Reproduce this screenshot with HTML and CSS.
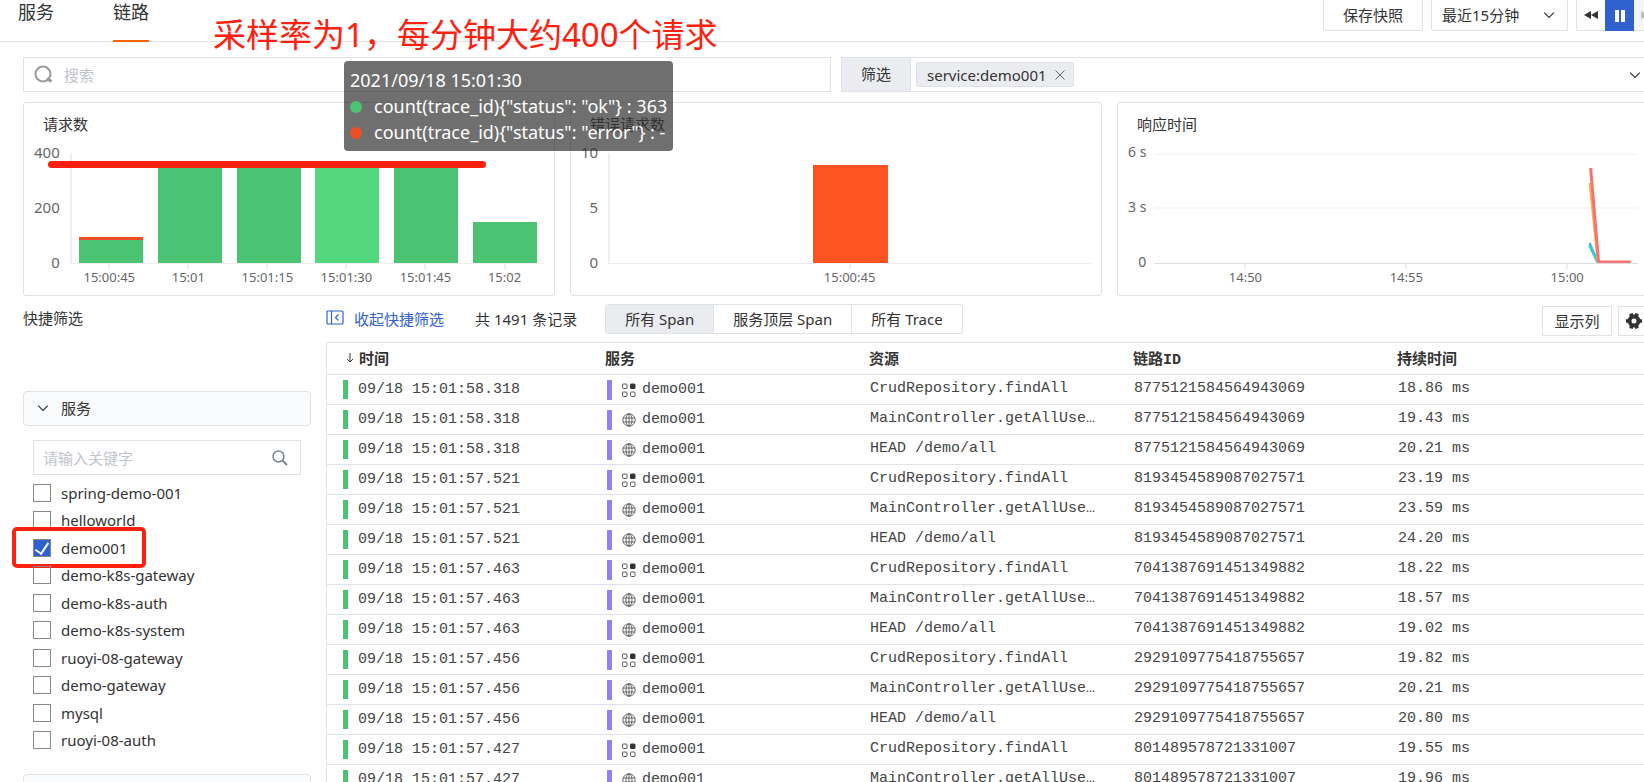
FILE: index.html
```html
<!DOCTYPE html>
<html lang="zh-CN">

<head>
    <meta charset="UTF-8">
    <meta name="viewport" content="width=device-width, initial-scale=1.0">
    <title>链路</title>
    <link rel="stylesheet" href="styles.css">
</head>

<body>
    <svg class="sprite" width="0" height="0">
        <symbol id="i-down" viewBox="0 0 10 10"><path d="M1 3l4 4 4-4" fill="none" stroke="currentColor"/></symbol>
        <symbol id="i-grid" viewBox="0 0 14 14">
            <g fill="none" stroke="#444" stroke-width="0.9"><rect x="0.5" y="1" width="4.500" height="4.500" rx="1"/><rect x="0.5" y="9" width="4.500" height="4.500" rx="1"/><rect x="8.500" y="9" width="4.500" height="4.500" rx="1"/></g>
            <rect x="8" y="0.5" width="5.500" height="5.500" rx="1.500" fill="#333"/>
        </symbol>
        <symbol id="i-globe" viewBox="0 0 14 14">
            <g fill="none" stroke="#444" stroke-width="0.8"><circle cx="7" cy="7" r="6.2"/><ellipse cx="7" cy="7" rx="3" ry="6.2"/><path d="M7 1v12M1 5h12M1 9h12"/></g>
        </symbol>
    </svg>

    <header class="topbar">
        <nav class="tabs">
            <a href="#" class="tab">服务</a>
            <a href="#" class="tab active">链路</a>
        </nav>
        <div class="top-actions">
            <button class="btn-snapshot">保存快照</button>
            <div class="time-select">
                <select aria-label="时间范围"><option>最近15分钟</option></select>
                <svg width="12" height="12"><use href="#i-down"/></svg>
            </div>
            <div class="player">
                <button aria-label="后退"><svg width="14" height="10" viewBox="0 0 14 10"><path d="M7 1v8L0 5zM14 1v8L7 5z" fill="#333"/></svg></button>
                <button class="pause" aria-label="暂停"><svg width="12" height="12" viewBox="0 0 12 12"><path d="M1 0h4v12H1zM7 0h4v12H7z" fill="#fff"/></svg></button>
                <button class="next" aria-label="前进"><svg width="14" height="10" viewBox="0 0 14 10"><path d="M0 1v8l7-4zM7 1v8l7-4z" fill="#bbb"/></svg></button>
            </div>
        </div>
    </header>

    <main class="content">
        <div class="search-row">
            <label class="search">
                <svg width="20" height="20" viewBox="0 0 20 20"><circle cx="9" cy="9" r="7.5" fill="none" stroke="#999" stroke-width="2"/><path d="M13 13.500l4.500 3" stroke="#999" stroke-width="3"/></svg>
                <input type="text" placeholder="搜索" aria-label="搜索">
            </label>
            <div class="filter">
                <span class="filter-name">筛选</span>
                <span class="tag">service:demo001<button aria-label="移除"><svg width="10" height="10" viewBox="0 0 10 10"><path d="M0.500 0.500l9 9M9.500 0.500l-9 9" stroke="#666"/></svg></button></span>
                <button class="filter-open" aria-label="展开"><svg width="12" height="12"><use href="#i-down"/></svg></button>
            </div>
        </div>

        <div class="cards">
            <section class="card">
                <h2>请求数</h2>
                <div class="chart">
                    <div class="y-axis"><span>400</span><span>200</span><span>0</span></div>
                    <div class="plot">
                        <div class="bar with-error" style="height: 24%"></div>
                        <div class="bar" style="height: 91%"></div>
                        <div class="bar" style="height: 91%"></div>
                        <div class="bar hover" style="height: 91%"></div>
                        <div class="bar" style="height: 91%"></div>
                        <div class="bar" style="height: 37%"></div>
                    </div>
                    <div class="x-axis"><span>15:00:45</span><span>15:01</span><span>15:01:15</span><span>15:01:30</span><span>15:01:45</span><span>15:02</span></div>
                </div>
            </section>
            <section class="card">
                <h2>错误请求数</h2>
                <div class="chart">
                    <div class="y-axis"><span>10</span><span>5</span><span>0</span></div>
                    <div class="plot">
                        <div class="bar error" style="height: 89%"></div>
                    </div>
                    <div class="x-axis"><span>15:00:45</span></div>
                </div>
            </section>
            <section class="card">
                <h2>响应时间</h2>
                <div class="chart line-chart">
                    <div class="y-axis"><span>6 s</span><span>3 s</span><span>0</span></div>
                    <div class="plot">
                        <svg viewBox="0 0 482 110" preserveAspectRatio="none">
                            <g fill="none" stroke-width="2">
                                <path d="M0 1h482M0 55h482" stroke="#f0f0f0" stroke-width="1"/>
                                <path d="M434 90l8 18" stroke="#5b8ff9"/>
                                <path d="M434 92l8 17" stroke="#36cbcb" stroke-width="3"/>
                                <path d="M434 30l8 78" stroke="#f9b44d"/>
                                <path d="M435 15l8 94h32" stroke="#fb7070" stroke-width="3"/>
                            </g>
                        </svg>
                    </div>
                    <div class="x-axis"><span>14:50</span><span>14:55</span><span>15:00</span></div>
                </div>
            </section>
        </div>

        <div class="body-row">
            <aside class="sidebar">
                <h2>快捷筛选</h2>
                <button class="group"><svg width="12" height="12"><use href="#i-down"/></svg>服务</button>
                <div class="keyword">
                    <input type="text" placeholder="请输入关键字" aria-label="请输入关键字">
                    <svg width="16" height="16" viewBox="0 0 16 16"><circle cx="6.500" cy="6.500" r="5.500" fill="none" stroke="#7d8595" stroke-width="1.500"/><path d="M10.500 10.500l4.500 4.500" stroke="#7d8595" stroke-width="2"/></svg>
                </div>
                <div class="options">
                    <label><input type="checkbox">spring-demo-001</label>
                    <label><input type="checkbox">helloworld</label>
                    <label class="marked"><input type="checkbox" checked>demo001</label>
                    <label><input type="checkbox">demo-k8s-gateway</label>
                    <label><input type="checkbox">demo-k8s-auth</label>
                    <label><input type="checkbox">demo-k8s-system</label>
                    <label><input type="checkbox">ruoyi-08-gateway</label>
                    <label><input type="checkbox">demo-gateway</label>
                    <label><input type="checkbox">mysql</label>
                    <label><input type="checkbox">ruoyi-08-auth</label>
                </div>
                <button class="group" aria-label="更多"></button>
            </aside>

            <section class="list">
                <div class="toolbar">
                    <a href="#" class="collapse">
                        <svg width="18" height="16" viewBox="0 0 18 16"><g fill="none" stroke="#2f62cf" stroke-width="1.200"><rect x="1" y="1" width="16" height="13" rx="1"/><path d="M5.500 1v13M12.500 4.500l-3 3 3 3"/></g></svg>
                        收起快捷筛选
                    </a>
                    <span class="total">共 1491 条记录</span>
                    <div class="segments">
                        <button class="active">所有 Span</button>
                        <button>服务顶层 Span</button>
                        <button>所有 Trace</button>
                    </div>
                    <button class="btn-columns">显示列</button>
                    <button class="btn-gear" aria-label="设置">
                        <svg width="16" height="16" viewBox="0 0 16 16"><circle cx="8" cy="8" r="4.500" fill="none" stroke="#333" stroke-width="4"/><g stroke="#333" stroke-width="3.600"><path d="M5 0.500l.6 2.500M11 .5l-.6 2.500M5 15.500l.6-2.500M11 15.500l-.6-2.500M0 8h2M14 8h2"/></g></svg>
                    </button>
                </div>
                <table>
                    <thead>
                        <tr><th class="col-time"><svg width="8" height="12" viewBox="0 0 8 12"><path d="M4 1v9M1 7l3 3 3-3" fill="none" stroke="#333"/></svg>时间</th><th class="col">服务</th><th class="col">资源</th><th class="col">链路ID</th><th>持续时间</th></tr>
                    </thead>
                    <tbody id="rows"></tbody>
                </table>
            </section>
        </div>
    </main>

    <div class="tooltip">
        <div>2021/09/18 15:01:30</div>
        <div><i class="dot ok"></i>count(trace_id){"status": "ok"} : 363</div>
        <div><i class="dot err"></i>count(trace_id){"status": "error"} : -</div>
    </div>
    <div class="note">采样率为1，每分钟大约400个请求</div>
    <div class="note-line"></div>

    <script>
        const resources = ["CrudRepository.findAll", "MainController.getAllUsers", "HEAD /demo/all"];
        const traces = [
            ["58.318", "8775121584564943069", ["18.86", "19.43", "20.21"]],
            ["57.521", "8193454589087027571", ["23.19", "23.59", "24.20"]],
            ["57.463", "7041387691451349882", ["18.22", "18.57", "19.02"]],
            ["57.456", "2929109775418755657", ["19.82", "20.21", "20.80"]],
            ["57.427", "801489578721331007", ["19.55", "19.96"]]
        ];
        let html = "";
        traces.forEach(([sec, id, durations]) => {
            durations.forEach((ms, i) => {
                const icon = i === 0 ? "i-grid" : "i-globe";
                html += `<tr>
                    <td><span class="cell"><i class="mark ok"></i>09/18 15:01:${sec}</span></td>
                    <td class="service"><span class="cell"><i class="mark"></i><svg width="14" height="14"><use href="#${icon}"/></svg>demo001</span></td>
                    <td class="text">${resources[i]}</td>
                    <td class="text">${id}</td>
                    <td class="text">${ms} ms</td>
                </tr>`;
            });
        });
        document.getElementById("rows").innerHTML = html;
    </script>
</body>

</html>
```
FILE: styles.css
```css
*, *::before, *::after { box-sizing: border-box; }
body {
    margin: 0;
    height: 100vh;
    overflow: hidden;
    position: relative;
    background: #fff;
    color: #333;
    font-family: "Noto Sans", "Noto Sans CJK SC", sans-serif;
    font-size: 15px;
}
button, input, select {
    font: inherit;
    color: inherit;
    background: none;
    border: none;
    padding: 0;
    margin: 0;
    outline: none;
}
a { text-decoration: none; color: inherit; }
h2 { margin: 0; font-size: 15px; font-weight: normal; }
.sprite { position: absolute; }

/* top bar */
.topbar {
    display: flex;
    justify-content: space-between;
    height: 42px;
    padding-left: 18px;
    margin-right: -19px;
    border-bottom: 1px solid #dfe2e8;
}
.tabs { display: flex; gap: 59px; }
.tab { height: 42px; line-height: 24px; font-size: 18px; }
.tab.active { border-bottom: 2px solid #ff6600; }
.top-actions { display: flex; gap: 8px; height: 31px; }
.btn-snapshot, .time-select, .player {
    border: 1px solid #dfe2e8;
    border-top: none;
    border-radius: 0 0 3px 3px;
}
.btn-snapshot { width: 100px; padding-bottom: 2px; }
.time-select { display: flex; align-items: center; width: 137px; padding: 0 12px 0 10px; }
.time-select select { flex: 1; appearance: none; }
.player { display: flex; }
.player button { width: 28px; display: flex; align-items: center; justify-content: center; }
.player .pause { width: 29px; height: 31px; background: #2f62cf; }
.player .next { background: #f5f5f5; }

/* the content runs slightly past the right edge of the window */
.content { padding: 15px 0 0 23px; margin-right: -5px; }
.search-row { display: flex; gap: 10px; }
.search, .filter {
    flex: 1 1 0;
    min-width: 0;
    display: flex;
    align-items: center;
    height: 35px;
    padding: 0;
    border: 1px solid #dfe2e8;
}
.search svg { margin: 0 10px; }
.search input { flex: 1; }
input::placeholder { color: #c0c4cc; opacity: 1; }
.filter-name {
    width: 69px;
    line-height: 33px;
    text-align: center;
    background: #ebecf0;
    border-right: 1px solid #dfe2e8;
}
.tag {
    display: flex;
    align-items: center;
    gap: 8px;
    height: 25px;
    margin-left: 5px;
    padding: 0 8px 0 10px;
    background: #ebecf0;
    border: 1px solid #dfe2e8;
    border-radius: 2px;
}
.tag button, .filter-open { display: flex; }
.filter-open { margin: 0 7px 0 auto; }

/* charts */
.cards { display: flex; gap: 15px; margin-top: 10px; }
.card {
    flex: 1;
    min-width: 0;
    padding: 10px;
    border: 1px solid #dfe2e8;
    border-radius: 3px;
}
.card h2 { line-height: 22px; padding-left: 9px; }
.chart {
    display: grid;
    grid-template-columns: auto 1fr;
    column-gap: 10px;
    margin-top: 18px;
    color: #666;
}
.y-axis {
    display: flex;
    flex-direction: column;
    justify-content: space-between;
    margin: -10px 0 -7px;
    line-height: 18px;
    text-align: right;
}
.plot {
    display: flex;
    justify-content: space-around;
    align-items: flex-end;
    height: 111px;
    border-left: 2px solid #eee;
    border-bottom: 1px solid #eee;
}
.bar { width: 64px; background: #4bc373; }
.bar.hover { background: #53d87f; }
.bar.error { width: 75px; background: #ff5324; }
.bar.with-error { border-top: 3px solid #ec4f23; }
.x-axis {
    grid-column: 2;
    display: flex;
    font-size: 13px;
    line-height: 16px;
    text-align: center;
}
.x-axis span { flex: 1; }
.x-axis span::before {
    content: "";
    display: block;
    width: 2px;
    height: 5px;
    margin: 0 auto;
    background: #eee;
}
.line-chart { column-gap: 9px; }
.line-chart .y-axis { font-size: 14px; }
.line-chart .plot { border-left: none; border-bottom-color: #ddd; }
.line-chart svg { width: 100%; height: 100%; }
.line-chart .x-axis { margin: 0 -2% 0 2%; }

/* quick filters */
.body-row { display: flex; gap: 15px; margin-top: 8px; }
.sidebar { width: 288px; flex: none; }
.sidebar h2 { line-height: 28px; margin-bottom: 59px; }
.group {
    display: flex;
    align-items: center;
    gap: 12px;
    width: 100%;
    height: 35px;
    padding: 0 0 2px 13px;
    background: #fafbfc;
    border: 1px solid #dfe2e8;
    border-radius: 4px;
}
.keyword {
    display: flex;
    align-items: center;
    height: 35px;
    margin: 14px 10px 4px;
    padding: 0 12px 0 9px;
    border: 1px solid #dfe2e8;
}
.keyword input { flex: 1; }
.options {
    display: grid;
    grid-auto-rows: 1fr;
    height: 275px;
    margin: 0 10px 20px;
}
.options label { position: relative; display: flex; align-items: center; gap: 10px; }
.options input {
    appearance: none;
    width: 18px;
    height: 18px;
    border: 1px solid #888;
}
.options input:checked {
    display: flex;
    justify-content: center;
    background: #2f62cf;
}
.options input:checked::before {
    content: "";
    width: 8px;
    height: 14px;
    border: solid #fff;
    border-width: 0 2px 2px 0;
    transform: rotate(34deg);
}
/* hand drawn frame round the picked service */
.marked::after {
    content: "";
    position: absolute;
    left: -21px;
    top: -7px;
    width: 134px;
    height: 41px;
    border: 4px solid #ff2010;
    border-radius: 5px;
}

/* span list */
.list { flex: 1; min-width: 0; }
.toolbar { display: flex; align-items: center; height: 30px; margin-bottom: 8px; }
.collapse { display: flex; align-items: center; gap: 10px; padding-bottom: 2px; color: #2f62cf; }
.total { margin: 0 28px 0 31px; padding-bottom: 2px; }
.segments { display: flex; height: 30px; border: 1px solid #dfe2e8; border-radius: 3px; }
.segments button { padding: 0 19px 1px; }
.segments button + button { border-left: 1px solid #dfe2e8; }
.segments .active { background: #ebecf0; }
.btn-columns, .btn-gear { height: 30px; border: 1px solid #dfe2e8; }
.btn-columns { width: 70px; margin: 4px 6px 0 auto; padding-bottom: 2px; }
.btn-gear { display: flex; align-items: center; justify-content: center; width: 31px; margin-top: 4px; }
table {
    width: 100%;
    table-layout: fixed;
    border-collapse: separate;
    border-spacing: 0;
    border: 1px solid #dfe2e8;
    border-radius: 3px 0 0 0;
    color: #444;
    font-family: "Liberation Mono", "Noto Sans CJK SC", monospace;
}
th {
    height: 32px;
    padding: 0 9px 2px;
    text-align: left;
    color: #333;
    border-bottom: 1px solid #dfe2e8;
}
.col-time { width: 269px; padding-left: 19px; }
.col-time svg { margin-right: 5px; }
.col { width: 264px; }
td {
    height: 30px;
    padding: 0 10px;
    line-height: 20px;
    white-space: nowrap;
    border-bottom: 1px solid #dfe2e8;
}
td:first-child { padding-left: 16px; }
td.service { padding-left: 11px; }
td.text { padding: 0 26px 2px 10px; overflow: hidden; text-overflow: ellipsis; }
.cell { display: flex; align-items: center; gap: 10px; }
.cell svg { margin-right: -4px; }
.mark { width: 5px; height: 20px; background: #957ff5; }
.mark.ok { height: 19px; background: #4bc373; }

/* overlays */
.tooltip {
    position: absolute;
    left: 344px;
    top: 61px;
    padding: 6px;
    line-height: 26px;
    font-size: 18px;
    white-space: nowrap;
    color: #fff;
    background: rgba(50, 50, 50, 0.7);
    border-radius: 4px;
}
.dot {
    display: inline-block;
    width: 12px;
    height: 12px;
    margin-right: 12px;
    border-radius: 50%;
    background: #4bc373;
}
.dot.err { background: #ec4f23; }
.note {
    position: absolute;
    left: 213px;
    top: 11px;
    line-height: 48px;
    font-size: 33px;
    color: #ff2010;
}
.note-line {
    position: absolute;
    left: 48px;
    top: 161px;
    width: 438px;
    height: 7px;
    border-radius: 4px;
    background: #ff2010;
}
```
